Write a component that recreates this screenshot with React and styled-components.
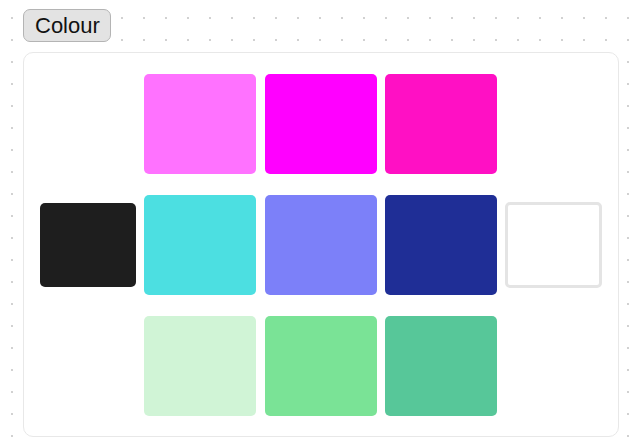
import React from "react";
import styled, { createGlobalStyle } from "styled-components";

const Global = createGlobalStyle`
  html, body {
    margin: 0;
    padding: 0;
    background-color: #ffffff;
    background-image: radial-gradient(circle, #d0d0d0 0.7px, transparent 1.1px);
    background-size: 22px 22px;
    background-position: 1px 7px;
    font-family: "Liberation Sans", Arial, sans-serif;
  }
  #root {
    min-height: 447px;
  }
`;

const Page = styled.div`
  padding: 9px 0 0 23px;
  display: flex;
  flex-direction: column;
  align-items: flex-start;
`;

const Toggle = styled.button`
  height: 33px;
  padding: 0 10px 0 11px;
  border: 1px solid #b4b4b4;
  border-radius: 7px;
  background: #e3e3e3;
  font-family: "Liberation Sans", Arial, sans-serif;
  font-size: 22px;
  color: #111;
  margin-bottom: 10px;
  cursor: pointer;
`;

const Card = styled.div`
  box-sizing: border-box;
  width: 596px;
  height: 385px;
  padding: 0 16px;
  background: #fff;
  border: 1px solid #e8e8e8;
  border-radius: 10px;
  display: flex;
  align-items: center;
  gap: 8px;
`;

const Grid = styled.div`
  display: grid;
  grid-template-columns: repeat(3, 112px);
  grid-auto-rows: 100px;
  column-gap: 8.5px;
  row-gap: 21px;
`;

const Swatch = styled.div`
  border-radius: 5px;
  background: ${(p) => p.$c};
`;

const SideSwatch = styled.div`
  box-sizing: border-box;
  width: ${(p) => p.$w}px;
  height: ${(p) => p.$h}px;
  border-radius: 5px;
  background: ${(p) => p.$c};
  border: ${(p) => (p.$outline ? "3px solid #e4e4e4" : "none")};
`;

const colours = [
  "#ff72ff",
  "#ff00ff",
  "#ff10c4",
  "#4cdfe1",
  "#7c80f9",
  "#1f2e96",
  "#d0f4d6",
  "#7ae396",
  "#57c799",
];

export default function App() {
  return (
    <>
      <Global />
      <Page>
        <Toggle>Colour</Toggle>
        <Card>
          <SideSwatch $w={96} $h={84} $c="#1e1e1e" />
          <Grid>
            {colours.map((c) => (
              <Swatch key={c} $c={c} />
            ))}
          </Grid>
          <SideSwatch $w={97} $h={86} $c="#fff" $outline />
        </Card>
      </Page>
    </>
  );
}
